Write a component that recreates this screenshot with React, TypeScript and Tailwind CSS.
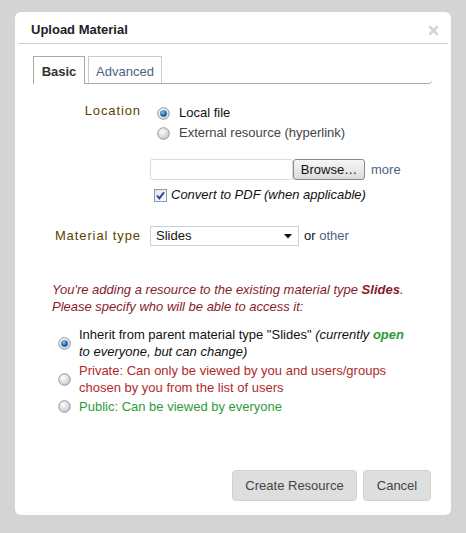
import React from 'react'

function Radio({ checked }: { checked?: boolean }) {
  return (
    <svg width="13" height="13" viewBox="0 0 13 13" className="shrink-0">
      <defs>
        <radialGradient id={checked ? 'rgOn' : 'rgOff'} cx="40%" cy="35%" r="70%">
          <stop offset="0%" stopColor="#ffffff" />
          <stop offset="100%" stopColor={checked ? '#c9ced4' : '#c4c4c4'} />
        </radialGradient>
        <radialGradient id="rgDot" cx="40%" cy="35%" r="70%">
          <stop offset="0%" stopColor="#8cc8f0" />
          <stop offset="60%" stopColor="#1f6fb8" />
          <stop offset="100%" stopColor="#0c3f78" />
        </radialGradient>
      </defs>
      <circle cx="6.5" cy="6.5" r="5.8" fill={`url(#${checked ? 'rgOn' : 'rgOff'})`} stroke="#9a9a9a" strokeWidth="1" />
      {checked ? <circle cx="6.5" cy="6.5" r="3.3" fill="url(#rgDot)" /> : null}
    </svg>
  )
}

function Checkbox() {
  return (
    <svg width="13" height="13" viewBox="0 0 13 13" className="shrink-0">
      <defs>
        <linearGradient id="cbBg" x1="0" y1="0" x2="1" y2="1">
          <stop offset="0%" stopColor="#dfe3ea" />
          <stop offset="100%" stopColor="#ffffff" />
        </linearGradient>
      </defs>
      <rect x="0.5" y="0.5" width="12" height="12" fill="url(#cbBg)" stroke="#8f99a8" />
      <path d="M3 6.5 L5.4 9.4 L10 3.2" fill="none" stroke="#2b3f9e" strokeWidth="1.9" />
    </svg>
  )
}

export default function App() {
  return (
    <div
      className="h-[533px] w-[466px] bg-[#d4d4d4] pl-[15px] pt-[12px] text-[13px] text-[#111]"
      style={{ fontFamily: '"Liberation Sans", Arial, sans-serif' }}
    >
      <div className="flex h-[503px] w-[436px] flex-col rounded-[6px] bg-white">
        <header className="mx-[3px] flex h-[32px] items-center justify-between border-b border-[#cfcfcf] pl-[13px] pr-[9px] pt-[5px]">
          <h1 className="text-[13px] font-bold text-[#222]">Upload Material</h1>
          <svg width="11" height="11" viewBox="0 0 11 11">
            <path d="M2 2 L9 9 M9 2 L2 9" stroke="#cdd7e3" strokeWidth="2.6" strokeLinecap="round" />
          </svg>
        </header>

        <div className="ml-[18px] mr-[19px] mt-[12px] flex h-[28px] items-start gap-[3px] rounded-br-[4px] border-b border-[#aaaaaa]">
          <div className="relative flex h-[28px] w-[52px] items-center justify-center border border-b-0 border-[#aaaaaa] bg-white pt-[3px] font-bold text-[#333]">
            Basic
          </div>
          <div className="flex h-[27px] w-[74px] items-center justify-center border border-b-0 border-[#cccccc] pt-[3px] text-[#4a6480]">
            Advanced
          </div>
        </div>

        <div className="mt-[19px] flex">
          <div className="w-[126px] pt-[1px] text-right leading-[14px] tracking-[0.9px] text-[#5a4300]">Location</div>
          <div className="ml-[9px]">
            <div className="flex h-[20px] items-center gap-[9px] pl-[7px]">
              <Radio checked />
              <span>Local file</span>
            </div>
            <div className="flex h-[20px] items-center gap-[9px] pl-[7px] text-[#444]">
              <Radio />
              <span>External resource (hyperlink)</span>
            </div>
          </div>
        </div>

        <div className="ml-[135px] mt-[16px] flex h-[21px] items-center">
          <div className="h-[21px] w-[143px] rounded-[2px] border border-[#dcdcdc]" />
          <button className="h-[21px] w-[72px] rounded-[3px] border border-[#8a8a8a] bg-gradient-to-b from-[#f6f6f6] to-[#dcdcdc] text-[13px] text-[#111]">
            Browse…
          </button>
          <span className="ml-[6px] text-[#4a6480]">more</span>
        </div>

        <div className="ml-[139px] mt-[5px] flex h-[20px] items-center gap-[4px]">
          <Checkbox />
          <span className="italic">Convert to PDF (when applicable)</span>
        </div>

        <div className="mt-[21px] flex items-center">
          <div className="w-[126px] text-right tracking-[0.9px] text-[#5a4300]">Material type</div>
          <div className="ml-[9px] flex h-[20px] w-[149px] items-center justify-between border border-[#c9d0da] pl-[5px] pr-[6px]">
            <span>Slides</span>
            <svg width="8" height="5" viewBox="0 0 8 5">
              <path d="M0 0 L8 0 L4 4.5 Z" fill="#111" />
            </svg>
          </div>
          <span className="ml-[5px]">
            or <span className="text-[#4a6480]">other</span>
          </span>
        </div>

        <p className="ml-[37px] mt-[35px] leading-[17px] italic text-[#8a1b2b]">
          You're adding a resource to the existing material type <b>Slides</b>.
          <br />
          Please specify who will be able to access it:
        </p>

        <div className="ml-[43px] mt-[11px] flex flex-col gap-[2px] leading-[17px]">
          <div className="flex items-center gap-[8px]">
            <Radio checked />
            <span className="w-[330px]">
              Inherit from parent material type "Slides"{' '}
              <i>
                (currently <b className="text-[#2f9a3a]">open</b> to everyone, but can change)
              </i>
            </span>
          </div>
          <div className="flex items-center gap-[8px] text-[#b02a2a]">
            <Radio />
            <span className="w-[330px]">
              Private: Can only be viewed by you and users/groups chosen by you from the list of users
            </span>
          </div>
          <div className="flex items-center gap-[8px] text-[#2f9a3a]">
            <Radio />
            <span className="w-[330px]">Public: Can be viewed by everyone</span>
          </div>
        </div>

        <div className="mt-auto flex justify-end gap-[6px] pb-[14px] pr-[20px]">
          <button className="h-[31px] w-[125px] rounded-[4px] border border-[#d2d2d2] bg-[#dedede] text-[13px] text-[#444]">
            Create Resource
          </button>
          <button className="h-[31px] w-[68px] rounded-[4px] border border-[#d2d2d2] bg-[#dedede] text-[13px] text-[#444]">
            Cancel
          </button>
        </div>
      </div>
    </div>
  )
}
